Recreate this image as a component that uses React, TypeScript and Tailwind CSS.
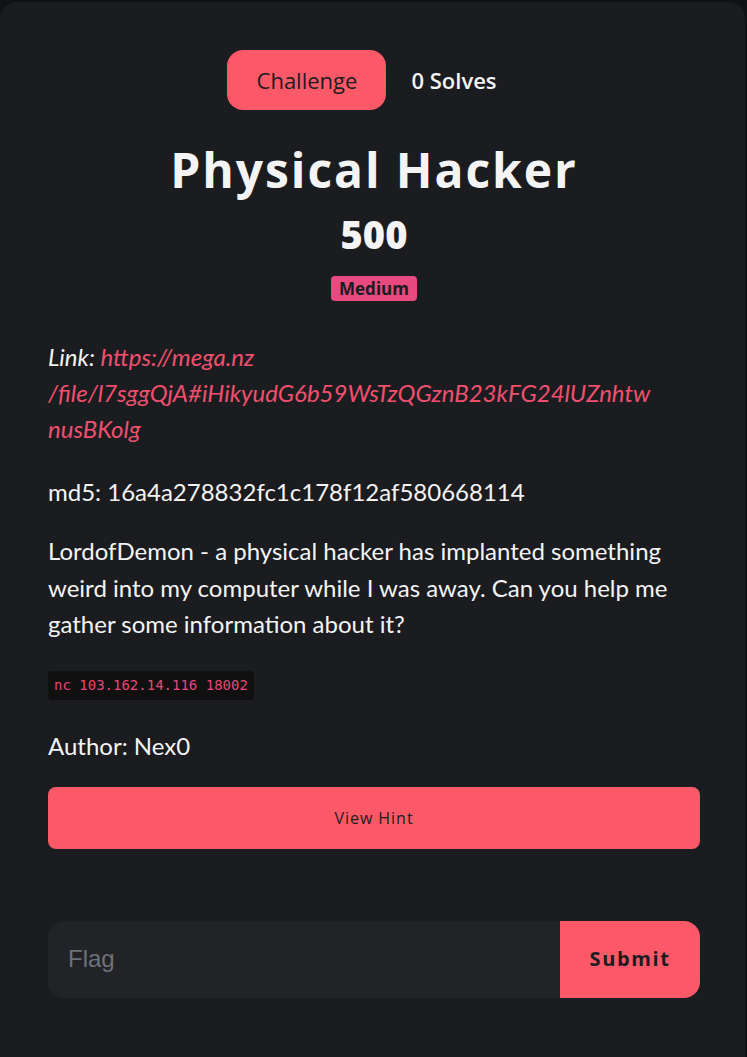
export default function App() {
  return (
    <div className="min-h-[1057px] bg-[#111214] pt-[2px] pr-[2px]">
      <div className="min-h-[1055px] rounded-t-2xl bg-[#1b1c20] pl-12 pr-[45px] pt-12 pb-16 text-[#f4f4f4] font-['Lato',sans-serif]">
        <div className="flex items-center justify-center gap-[25px] pr-6">
          <span className="flex h-[60px] w-[159px] items-center justify-center rounded-2xl bg-[#fb5968] text-[22px] font-medium text-[#1b1c20] font-['Open_Sans',sans-serif]">
            Challenge
          </span>
          <span className="text-[22px] font-semibold font-['Open_Sans',sans-serif]">0 Solves</span>
        </div>

        <h1 className="mt-[30px] text-center text-[48px] leading-[60px] font-bold tracking-[0.04em] font-['Open_Sans',sans-serif]">
          Physical Hacker
        </h1>
        <div className="mt-3 text-center text-[38px] leading-[44px] font-extrabold font-['Open_Sans',sans-serif]">500</div>
        <div className="mt-[20px] flex justify-center">
          <span className="rounded-[4px] bg-[#e84a7f] px-2 text-[17px] leading-[25px] font-bold text-[#1b1c20] font-['Open_Sans',sans-serif]">
            Medium
          </span>
        </div>

        <p className="mt-[38px] text-[24px] leading-[36px] italic break-all">
          Link:{" "}
          <a className="text-[#f0506e]">
            https://mega.nz
            <br />
            /file/l7sggQjA#iHikyudG6b59WsTzQGznB23kFG24lUZnhtw
            <br />
            nusBKolg
          </a>
        </p>
        <p className="mt-[27px] text-[24px] leading-[36px]">md5: 16a4a278832fc1c178f12af580668114</p>
        <p className="mt-[23px] text-[24px] leading-[36.5px]">
          LordofDemon - a physical hacker has implanted something weird into my computer while I was away. Can you help me gather some information about it?
        </p>
        <div className="mt-[28px] flex">
          <code className="rounded-[4px] bg-[#0f100f] px-[6px] py-[6px] text-[14px] leading-[17px] text-[#e8457a] font-['DejaVu_Sans_Mono',monospace]">
            nc 103.162.14.116 18002
          </code>
        </div>
        <p className="mt-[28px] text-[24px] leading-[36px]">Author: Nex0</p>

        <button className="mt-[23px] flex h-[62px] w-full items-center justify-center rounded-lg bg-[#fb5968] text-[16px] tracking-[0.06em] text-[#1b1c20] font-['Open_Sans',sans-serif]">
          View Hint
        </button>

        <div className="mt-[72px] flex h-[77px] overflow-hidden rounded-2xl">
          <input
            placeholder="Flag"
            className="min-w-0 flex-1 bg-[#222326] px-5 text-[24px] text-white outline-none placeholder:text-[#6c727a] font-['Liberation_Sans',sans-serif]"
          />
          <button className="w-[140px] bg-[#fb5968] text-[20px] font-bold tracking-[0.08em] text-[#1b1c20] font-['Open_Sans',sans-serif]">
            Submit
          </button>
        </div>
      </div>
    </div>
  );
}
